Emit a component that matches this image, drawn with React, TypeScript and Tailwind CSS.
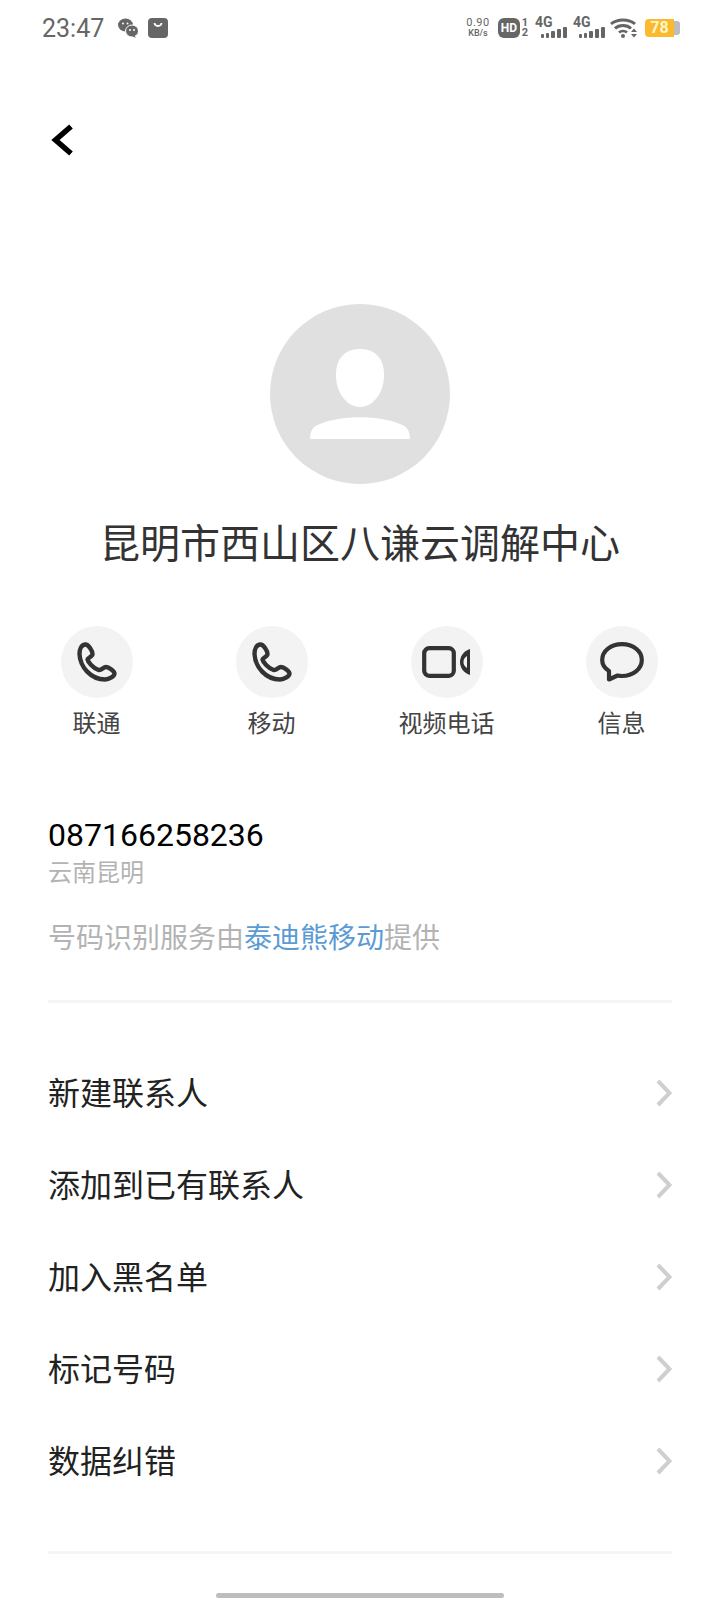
import React from 'react';

const font = "font-['Roboto','Noto_Sans_CJK_SC',sans-serif]";

const PhoneIcon = () => (
  <svg width="40" height="40" viewBox="0 0 40 40" fill="none" stroke="#333333" strokeWidth="4.4" strokeLinejoin="round">
    <path d="M8 2.500C4.500 3 2.500 7 2.500 12C3 25 14 37.500 28 37.500C32.500 37.500 37.500 34 37.500 31.500C37.500 29.500 32 25 29 25C26 25 25 28.500 21.500 28C16 26 11 20 10.500 17.500C10.500 15.500 15.500 15 15.500 12C15.500 9 11.500 2 8 2.500Z" />
  </svg>
);

const VideoIcon = () => (
  <svg width="50" height="32" viewBox="0 0 50 32" fill="none">
    <rect x="2.200" y="2.200" width="29.600" height="27.600" rx="5" stroke="#333333" strokeWidth="4.200" />
    <path d="M48 3V29C41 27 38 21 38 16C38 11 41 5 48 3Z" fill="#333333" />
    <path d="M45 10V22C42 20 41.500 18 41.500 16C41.500 14 42 12 45 10Z" fill="#f3f3f3" />
  </svg>
);

const MessageIcon = () => (
  <svg width="44" height="40" viewBox="0 0 44 40" fill="none">
    <path
      d="M22 2.200C11 2.200 2.200 9 2.200 18C2.200 22.500 5 26.500 9 29L9 37.500L17.500 33.500C19 33.800 20.500 34 22 34C33 34 41.800 27 41.800 18C41.800 9 33 2.200 22 2.200Z"
      stroke="#333333"
      strokeWidth="4.200"
      strokeLinejoin="round"
    />
  </svg>
);

const ChevronRight = () => (
  <svg width="16" height="28" viewBox="0 0 16 28" fill="none">
    <path d="M2 2L13.500 14L2 26" stroke="#cfcfcf" strokeWidth="4" />
  </svg>
);

const StatusLeft = () => (
  <div className="flex items-center">
    <span className="text-[25px] leading-none text-[#666666] ml-[42px] w-[76px]">23:47</span>
    <svg width="20" height="20" viewBox="0 0 20 20" fill="#666666">
      <ellipse cx="7.500" cy="7" rx="7.500" ry="6.500" />
      <ellipse cx="14" cy="13" rx="6.500" ry="6" stroke="#ffffff" strokeWidth="1" />
      <path d="M16 17L18 20L14 18Z" />
      <circle cx="5" cy="5.500" r="1" fill="#ffffff" />
      <circle cx="9.500" cy="5.500" r="1" fill="#ffffff" />
      <circle cx="12" cy="12" r="1" fill="#ffffff" />
      <circle cx="16" cy="12" r="1" fill="#ffffff" />
    </svg>
    <svg className="ml-[10px]" width="20" height="20" viewBox="0 0 20 20">
      <rect width="20" height="20" rx="4" fill="#666666" />
      <path d="M6.500 5C7 9 13 9 13.500 5" stroke="#ffffff" strokeWidth="1.800" fill="none" />
    </svg>
  </div>
);

const Signal = () => (
  <div className="relative w-[31px] h-[20px]">
    <span className="absolute left-0 top-[-3px] text-[14px] leading-none font-bold text-[#666666]">4G</span>
    <div className="absolute left-[6px] bottom-0 flex items-end gap-[2px]">
      <div className="w-[3px] h-[4px] rounded-[1px] bg-[#666666]" />
      <div className="w-[3px] h-[5px] rounded-[1px] bg-[#666666]" />
      <div className="w-[4px] h-[7px] rounded-[1px] bg-[#666666]" />
      <div className="w-[4px] h-[9px] rounded-[1px] bg-[#666666]" />
      <div className="w-[4px] h-[11px] rounded-[1px] bg-[#666666]" />
    </div>
  </div>
);

const StatusRight = () => (
  <div className="flex items-center mr-[40px]">
    <div className="flex flex-col items-center w-[26px] text-[#666666]">
      <span className="text-[11px] leading-[10px] tracking-[0.5px]">0.90</span>
      <span className="text-[9px] leading-[10px] font-medium">KB/s</span>
    </div>
    <div className="flex items-center justify-center ml-[7px] w-[22px] h-[20px] rounded-[6px] bg-[#666666] text-white text-[12px] leading-none font-bold">HD</div>
    <div className="flex flex-col items-center w-[10px] text-[#666666] text-[11px] leading-[10px] font-bold">
      <span>1</span>
      <span>2</span>
    </div>
    <div className="ml-[5px]"><Signal /></div>
    <div className="ml-[7px]"><Signal /></div>
    <svg className="ml-[6px]" width="28" height="20" viewBox="0 0 28 20" fill="none">
      <path d="M1 6C7 0.500 19 0.500 25 6" stroke="#666666" strokeWidth="3" />
      <path d="M5 10.500C9 6.500 17 6.500 21 10.500" stroke="#666666" strokeWidth="3" />
      <path d="M9 14.500C11 12.500 15 12.500 17 14.500" stroke="#666666" strokeWidth="2.600" />
      <circle cx="13" cy="18" r="2" fill="#666666" />
      <path d="M21 14L24 10.500L27 14Z" fill="#666666" />
      <path d="M21 16L24 19.500L27 16Z" fill="#666666" />
    </svg>
    <div className="flex items-center ml-[7px]">
      <div className="flex items-center justify-center w-[29px] h-[18px] rounded-l-[4px] bg-[#fbb92d] text-[#fff6c8] text-[16px] leading-none font-bold">78</div>
      <div className="w-[6px] h-[14px] rounded-r-[3px] bg-[#bdbdbd]" />
    </div>
  </div>
);

const actions = [
  { label: '联通', icon: <PhoneIcon /> },
  { label: '移动', icon: <PhoneIcon /> },
  { label: '视频电话', icon: <VideoIcon /> },
  { label: '信息', icon: <MessageIcon /> },
];

const rows = ['新建联系人', '添加到已有联系人', '加入黑名单', '标记号码', '数据纠错'];

export default function App() {
  return (
    <div className={`w-[720px] h-[1600px] bg-white overflow-hidden ${font}`}>
      <div className="flex items-center justify-between h-[56px]">
        <StatusLeft />
        <StatusRight />
      </div>

      <div className="mt-[68px] pl-[51px] h-[32px]">
        <svg width="22" height="32" viewBox="0 0 22 32" fill="none">
          <path d="M20 2.500L4.500 16L20 29.500" stroke="#000000" strokeWidth="5.500" />
        </svg>
      </div>

      <div className="mt-[148px] flex justify-center">
        <div className="w-[180px] h-[180px] rounded-full bg-[#e0e0e0] flex items-center justify-center">
          <svg width="100" height="90" viewBox="0 0 100 90" fill="#ffffff">
            <path d="M50 0C64 0 74 8 74 26C74 44 63 58 50 58C37 58 26 44 26 26C26 8 36 0 50 0Z" />
            <path d="M0 90C0 82 3 77 10 75C30 66 70 66 90 75C97 77 100 82 100 90Z" />
          </svg>
        </div>
      </div>

      <div className="mt-[36px] text-center text-[40px] leading-[50px] text-[#333333]">昆明市西山区八谦云调解中心</div>

      <div className="mt-[56px] pl-[9px] pr-[11px] grid grid-cols-4">
        {actions.map((a) => (
          <div key={a.label} className="flex flex-col items-center">
            <div className="w-[72px] h-[72px] rounded-full bg-[#f3f3f3] flex items-center justify-center">{a.icon}</div>
            <span className="mt-[11px] text-[24px] leading-[30px] text-[#444444]">{a.label}</span>
          </div>
        ))}
      </div>

      <div className="px-[48px]">
        <div className="mt-[76px] text-[32px] leading-[40px] text-black">087166258236</div>
        <div className="mt-[3px] text-[24px] leading-[30px] text-[#b3b3b3]">云南昆明</div>
        <div className="mt-[31px] text-[28px] leading-[40px] text-[#b3b3b3]">
          号码识别服务由<span className="text-[#5b9bd5]">泰迪熊移动</span>提供
        </div>
        <div className="mt-[41px] h-[3px] bg-[#f5f5f5]" />

        <div className="mt-[44px]">
          {rows.map((r) => (
            <div key={r} className="h-[92px] flex items-center justify-between text-[32px] text-[#222222]">
              <span className="relative top-[1px]">{r}</span>
              <ChevronRight />
            </div>
          ))}
        </div>
        <div className="mt-[44px] h-[3px] bg-[#f5f5f5]" />
      </div>

      <div className="mt-[39px] mx-auto w-[288px] h-[5px] rounded-full bg-[#bdbdbd]" />
    </div>
  );
}
